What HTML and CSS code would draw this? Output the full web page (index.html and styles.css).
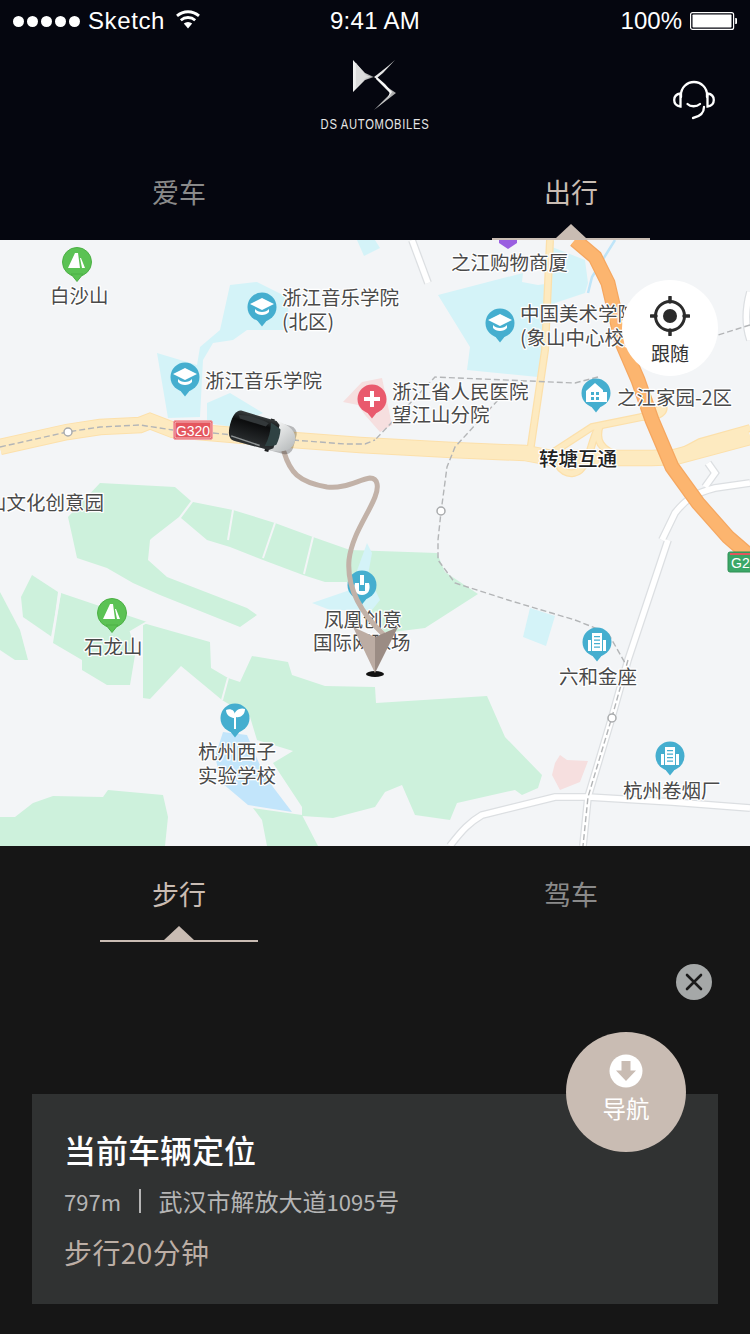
FILE: index.html
```html
<!DOCTYPE html>
<html lang="zh-CN">
<head>
<meta charset="utf-8">
<title>DS 出行</title>
<link rel="stylesheet" href="styles.css">
</head>
<body>
<div class="app">
  <header class="top">
    <div class="status">
      <div class="status-left">
        <span class="dots"><i></i><i></i><i></i><i></i><i></i></span>
        <span class="carrier">Sketch</span>
        <svg class="wifi" viewBox="0 0 26 20"><path d="M13 19.5 8.8 14.6a6.4 6.4 0 0 1 8.4 0z" fill="#fff"/><path d="M5.8 11.2a11 11 0 0 1 14.4 0M2 6.9a16.6 16.6 0 0 1 22 0" fill="none" stroke="#fff" stroke-width="2.8"/></svg>
      </div>
      <div class="status-mid">9:41 AM</div>
      <div class="status-right">
        <span>100%</span>
        <svg class="battery" viewBox="0 0 47 18"><rect x=".6" y=".6" width="43" height="16.8" rx="2" fill="none" stroke="#fff" stroke-width="1.2"/><rect x="2.5" y="2.5" width="39" height="13" rx=".8" fill="#fff"/><path d="M45.2 6h.8a1 1 0 0 1 1 1v4a1 1 0 0 1-1 1h-.8z" fill="#fff"/></svg>
      </div>
    </div>
    <div class="brand">
      <div></div>
      <div class="logo">
        <svg class="ds" viewBox="0 0 44 50">
          <defs>
            <linearGradient id="w1" x1="0" x2="1" y1="0" y2="0"><stop offset="0" stop-color="#f4f4f4"/><stop offset=".6" stop-color="#cfcfcf"/><stop offset="1" stop-color="#777"/></linearGradient>
            <linearGradient id="w2" x1="0" x2="1" y1="0" y2="1"><stop offset="0" stop-color="#fff"/><stop offset=".6" stop-color="#c8c8c8"/><stop offset="1" stop-color="#8a8a8a"/></linearGradient>
          </defs>
          <path d="M0 0 12 13 21 17 12 20 0 32Z" fill="url(#w1)"/>
          <path d="M3 3 12 15 19 17 12 18 3 28Z" fill="#dcdcdc"/>
          <path d="M42 0C34 7 29 11 25 14L21 17 29 23 34 27 43 33 21 50 36 35C38 31 34 27 30 24L24 18 30 13Z" fill="url(#w2)"/>
          <path d="M24 17 32 24 39 32 34 39 37 33 31 27 23 19Z" fill="#f7f7f7"/>
        </svg>
        <div class="wordmark">DS AUTOMOBILES</div>
      </div>
      <svg class="headset" viewBox="0 0 42 40">
        <g fill="none" stroke="#fff" stroke-width="2.3" stroke-linecap="round">
          <path d="M8 17V15a13 13 0 0 1 26 0v2"/>
          <path d="M7.500 13.500C4 14 1.200 15.800 1.200 20s2.800 6 6.300 6.500zM34.500 13.500c3.500.5 6.300 2.300 6.300 6.500s-2.800 6-6.300 6.500z"/>
          <path d="M14.500 24c3 3 9 3 12.500 0"/>
          <path d="M31 27c0 6-3.500 9.500-11 11"/>
        </g>
      </svg>
    </div>
    <nav class="tabs top-tabs">
      <div class="tab">爱车</div>
      <div class="tab on">出行</div>
    </nav>
  </header>

  <main class="map">
    <svg class="map-svg" viewBox="0 240 750 606">
      <defs>
        <linearGradient id="carbody" x1="0" x2="0" y1="0" y2="1"><stop offset="0" stop-color="#3a3f40"/><stop offset=".3" stop-color="#0c0d0e"/><stop offset="1" stop-color="#2c3032"/></linearGradient>
        <linearGradient id="hood" x1="0" x2="1" y1="0" y2="1"><stop offset="0" stop-color="#f4f5f5"/><stop offset="1" stop-color="#b0b4b5"/></linearGradient>
        <g id="tail"><circle r="14.500"/><path d="M-6 12 0 19.500 6 12z"/></g>
        <path id="rw1" d="M668 540 628 660 612 717 588 797 583 846"/>
        <path id="rw2" d="M662 540 675 513C685 500 695 493 715 488L750 483"/>
        <path id="rw3" d="M450 846C462 830 470 822 482 815L555 797 588 797 672 802 750 808"/>
        <path id="rw4" d="M412 240 428 283"/>
        <path id="rw5" d="M750 292C745 310 745 325 750 340"/>
        <path id="rw6" d="M708 463 715 473 705 487"/>
        <path id="y1" d="M0 447 67 432 100 427 140 425 150 421 173 430 233 435 293 440 360 445 452 450 525 453 552 458 652 458 675 457 750 437"/>
        <path id="y2" d="M530 452 545 350 550 240"/>
        <path id="y3" d="M552 453 592 427 642 417 665 407"/>
        <path id="y4" d="M557 456C556 470 570 478 580 470 590 460 590 445 598 428"/>
        <path id="y5" d="M600 425C595 440 600 450 620 456"/>
        <path id="y6" d="M670 458 700 442 750 428"/>
        <path id="y7" d="M640 417C655 417 668 415 662 402"/>
        <path id="hw" d="M575 240 595 257 608 283 622 343 638 380 652 420 672 467 698 503 728 537 750 556"/>
        <g id="tower">
          <path class="glyph" d="M-5 -9H5V9H-5zM-9 -2H-6V9H-9zM6 -2H9V9H6z"/>
          <path class="m-holes" d="M-3 -6H3V-4.800H-3zM-3 -2.500H3V-1.300H-3zM-3 1H3V2.200H-3zM-3 4.500H3V5.700H-3z"/>
        </g>
      </defs>

      <g class="park">
        <path d="M68 517 100 483 175 487 191 501 179 517 152 538 150 540 148 560 167 577 247 608 257 615 240 627 160 595 133 583 107 568 77 558 72 535z"/>
        <path d="M193 502 233 510 275 523 313 537 350 550 437 553 445 572 478 594 425 628 385 633 347 582 325 582 303 575 263 560 230 547 207 540 181 518z"/>
        <path d="M252 656 288 662 292 675 325 686 375 687 376 703 487 696 505 737 542 775 538 788 522 795 515 790 457 803 450 820 415 815 402 785 385 792 375 807 333 818 302 816 302 807 273 763 293 751 257 740 250 717 222 700 228 678 240 682z"/>
        <path d="M143 623 210 642 211 668 228 678 222 700 181 666 150 699 143 698z"/>
        <path d="M32 575 58 592 52 637 23 617 21 597z"/>
        <path d="M61 593 147 622 130 632 135 655 130 685 107 685 82 670 82 660 53 643z"/>
        <path d="M0 592 20 630 28 660 15 660 0 650z"/>
        <path d="M0 817 15 817 33 803 53 796 103 797 108 790 163 795 168 817 165 846 0 846z"/>
        <path d="M253 808 302 815 318 846 267 846 262 820z"/>
      </g>
      <g class="cuts">
        <path d="M233 510 228 540M275 523 263 558M313 537 304 574M60 593 52 637M222 700 228 678M147 622 130 632"/>
      </g>
      <g class="water">
        <path d="M230 285 257 282 287 297 290 330 247 330 233 340 213 343 203 360 200 417 168 418 157 353 197 365 200 347 220 330z"/>
        <path d="M207 403 230 393 263 413 233 427 207 423z"/>
        <path d="M357 240 375 240 380 248 364 256z"/>
        <path d="M438 295 523 273 522 282 538 285 552 283 552 247 585 260 588 283 585 293 555 303 543 347 538 377 467 370 470 347z"/>
        <path d="M530 608 555 616 546 646 523 637z"/>
        <path d="M367 543 372 553 368 575 380 600 372 610 330 610 312 603 350 590z"/>
      </g>
      <path class="lake" d="M223 732 247 735 262 770 273 787 292 812 248 805 222 783 215 757z"/>
      <path class="stream" d="M615 240 592 277 588 293"/>
      <g class="pink">
        <path d="M343 402 362 382 382 378 392 425 380 432 365 415 358 405z"/>
        <path d="M560 755 567 760 588 761 580 782 560 790 552 775 555 763z"/>
      </g>

      <g class="wroad-o">
        <use href="#rw1"/><use href="#rw2"/><use href="#rw3"/><use href="#rw4"/><use href="#rw5"/><use href="#rw6"/>
      </g>
      <g class="wroad-i">
        <use href="#rw1"/><use href="#rw2"/><use href="#rw3"/><use href="#rw4"/><use href="#rw5"/><use href="#rw6"/>
      </g>

      <g class="ythin-o">
        <use href="#y2"/><use href="#y3"/><use href="#y4"/><use href="#y5"/><use href="#y6"/><use href="#y7"/>
      </g>
      <g class="ymain-o"><use href="#y1"/></g>
      <g class="ythin-i">
        <use href="#y2"/><use href="#y3"/><use href="#y4"/><use href="#y5"/><use href="#y6"/><use href="#y7"/>
      </g>
      <g class="ymain-i"><use href="#y1"/></g>

      <g class="oroad-o"><use href="#hw"/></g>
      <g class="oroad-i"><use href="#hw"/></g>

      <g class="dash">
        <path d="M0 447 67 432 100 427 140 425 173 430"/>
        <path d="M213 433 233 435M293 440 345 444 365 444 375 440"/>
        <path d="M750 325 718 335M598 377 575 383 435 377 375 440"/>
        <path d="M498 400 455 447 447 467 441 512 438 540 438 560 455 583 508 600 575 620 608 633 625 663"/>
        <path d="M628 660 612 717 588 797 583 846"/>
      </g>
      <circle class="node" cx="68" cy="432" r="4"/>
      <circle class="node" cx="441" cy="511" r="4"/>
      <circle class="node" cx="612" cy="718" r="4"/>

      <g class="badge-red">
        <rect x="173.500" y="420.500" width="39" height="19" rx="2"/>
        <rect class="inner" x="175" y="422" width="36" height="16" rx="1"/>
        <text x="193" y="435.500">G320</text>
      </g>
      <g class="badge-green">
        <rect x="728" y="552" width="34" height="20" rx="2"/>
        <rect class="strip" x="730" y="553" width="30" height="2"/>
        <text x="731" y="568">G25</text>
      </g>

      <path class="pur" d="M499 240H517V243L508 249 499 243z"/>
      <use href="#tail" x="77" y="262" class="m-green"/>
      <path class="glyph" d="M75 253H78L80 268H68zM81 258 85 268H82L80 258z"/>
      <use href="#tail" x="112" y="613" class="m-green"/>
      <path class="glyph" d="M110 604H113L115 619H103zM116 609 120 619H117L115 609z"/>

      <use href="#tail" x="262" y="307" class="m-blue"/>
      <path class="glyph" d="M262 298 274 304 262 310 250 304zM255 309C258 313 266 313 269 309V312C266 316 258 316 255 312z"/>
      <use href="#tail" x="185" y="377" class="m-blue"/>
      <path class="glyph" d="M185 368 197 374 185 380 173 374zM178 379C181 383 189 383 192 379V382C189 386 181 386 178 382z"/>
      <use href="#tail" x="500" y="323" class="m-blue"/>
      <path class="glyph" d="M500 314 512 320 500 326 488 320zM493 325C496 329 504 329 507 325V328C504 332 496 332 493 328z"/>

      <use href="#tail" x="372" y="399" class="m-red"/>
      <path class="glyph" d="M370 391H374V397H380V401H374V407H370V401H364V397H370z"/>

      <use href="#tail" x="596" y="393" class="m-blue"/>
      <path class="glyph" d="M595 383 603 390V392H607V402H586V391z"/>
      <path class="m-holes" d="M591 392h3v3h-3zM596 392h3v3h-3zM591 397h3v3h-3zM596 397h3v3h-3z"/>

      <use href="#tail" x="235" y="718" class="m-blue"/>
      <path class="glyph" d="M234 718C232 718 226 716 226 710 231 708 235 711 234.500 714 235 711 240 707 245 709 245 715 240 718 236 717V729H234z"/>

      <use href="#tail" x="597" y="642" class="m-blue"/>
      <use href="#tower" x="597" y="642"/>
      <use href="#tail" x="670" y="756" class="m-blue"/>
      <use href="#tower" x="670" y="756"/>

      <use href="#tail" x="362" y="585" class="m-blue"/>
      <path class="glyph" d="M360 575H364V585H360zM355 583 359 583V591H365V583H369C371 590 368 595 362 595 356 595 353 590 355 583z"/>

      <g class="lb" transform="translate(0 1)">
        <text x="50" y="302">白沙山</text>
        <text x="282" y="304">浙江音乐学院</text>
        <text x="282" y="328">(北区)</text>
        <text x="205" y="387">浙江音乐学院</text>
        <text x="-13" y="509">山文化创意园</text>
        <text x="451" y="269">之江购物商厦</text>
        <text x="520" y="320">中国美术学院</text>
        <text x="520" y="344">(象山中心校区)</text>
        <text x="392" y="398">浙江省人民医院</text>
        <text x="392" y="421">望江山分院</text>
        <text x="617" y="404">之江家园-2区</text>
        <text x="539" y="465" class="dark">转塘互通</text>
        <text x="84" y="653">石龙山</text>
        <text x="198" y="758">杭州西子</text>
        <text x="198" y="782">实验学校</text>
        <text x="324" y="626">凤凰创意</text>
        <text x="313" y="649">国际网球场</text>
        <text x="559" y="683">六和金座</text>
        <text x="623" y="797">杭州卷烟厂</text>
      </g>

      <path class="route" d="M284 452C290 472 298 482 327 487 345 489 358 480 370 478 378 478 379 487 375 497 368 515 352 535 349 560 347 585 358 610 383 634"/>

      <ellipse class="pin-shadow" cx="375" cy="674" rx="9" ry="3"/>
      <path class="pin-l" d="M353 627 375 637V673z"/>
      <path class="pin-r" d="M398 627 375 637V673z"/>

      <g transform="translate(263 433) rotate(15)">
        <rect class="car-shadow" x="-33" y="-14" width="66" height="29" rx="8"/>
        <path d="M4 -16h4v3h-4zM6 13h4v4h-4z" fill="#1a1c1d"/>
        <path d="M10 -15C24 -15 33 -9 33 0S24 15 10 15z" fill="url(#hood)"/>
        <path d="M-26 -16 10 -15 14 -12 14 12 10 15-26 15C-31 15-34 10-34 0S-31-16-26-16z" fill="url(#carbody)"/>
        <path d="M5 -12C10 -11 14 -9 16 -8 17 -3 17 3 16 8 14 10 10 11 5 12 7 4 7 -4 5 -12z" fill="#2f4243"/>
        <path d="M-28 -11C-18 -14-6 -13 3 -11L1 -7-26 -8z" fill="#33383a"/>
        <path d="M-30 11 0 13" stroke="#8f9495" stroke-width="1.500" fill="none"/>
      </g>
    </svg>
    <div class="follow">
      <svg class="target" viewBox="0 0 40 40">
        <circle cx="20" cy="20" r="14.500" fill="none" stroke="#2b2b2b" stroke-width="3"/>
        <circle cx="20" cy="20" r="7" fill="#2b2b2b"/>
        <path d="M20 1v5M20 34v5M1 20h5M34 20h5" stroke="#2b2b2b" stroke-width="3.500" stroke-linecap="round"/>
      </svg>
      <span>跟随</span>
    </div>
  </main>

  <section class="panel">
    <nav class="tabs low-tabs">
      <div class="tab on">步行</div>
      <div class="tab">驾车</div>
    </nav>
    <div class="close-row">
      <button class="close" type="button" aria-label="关闭">
        <svg viewBox="0 0 18 18"><path d="M2 2 16 16M16 2 2 16" stroke="#1a1a1a" stroke-width="2.600" stroke-linecap="round"/></svg>
      </button>
    </div>
    <article class="card">
      <h1 class="card-title">当前车辆定位</h1>
      <p class="card-addr"><span class="num">797m</span><i class="sep"></i><span>武汉市解放大道<span class="num">1095</span>号</span></p>
      <p class="card-time">步行20分钟</p>
      <div class="nav-btn">
        <svg class="nav-icon" viewBox="0 0 34 34"><circle cx="17" cy="17" r="16.500" fill="#fff"/><path d="M12.500 7h9v9.500H27L17 27 7 16.500h5.500z" fill="#c9bcb3"/></svg>
        <span>导航</span>
      </div>
    </article>
  </section>
</div>
</body>
</html>
```
FILE: styles.css
```css
* { box-sizing: border-box; }
html, body { margin: 0; padding: 0; }
body { background: #161616; font-family: "Noto Sans CJK SC", "Liberation Sans", sans-serif; }
.app { width: 750px; height: 1334px; overflow: hidden; display: flex; flex-direction: column; }

.top { height: 240px; background: #05060f; color: #fff; display: flex; flex-direction: column; }
.status { height: 42px; padding: 0 13px; display: grid; grid-template-columns: 1fr auto 1fr; align-items: center; font-family: "Liberation Sans", sans-serif; font-size: 24px; }
.status-left { display: flex; align-items: center; gap: 8px; }
.carrier { letter-spacing: .6px; }
.dots { display: flex; gap: 3px; }
.dots i { width: 11px; height: 11px; border-radius: 50%; background: #fff; }
.wifi { width: 26px; height: 20px; margin-left: 2px; margin-top: -4px; }
.status-mid { text-align: center; letter-spacing: .3px; }
.status-right { display: flex; justify-content: flex-end; align-items: center; gap: 8px; }
.battery { width: 47px; height: 18px; }

.brand { height: 108px; display: grid; grid-template-columns: 1fr auto 1fr; align-items: start; padding-top: 18px; }
.logo { display: flex; flex-direction: column; align-items: center; }
.ds { width: 44px; height: 50px; }
.wordmark { font-family: "Liberation Sans", sans-serif; font-size: 14px; line-height: 16px; margin-top: 6px; letter-spacing: .9px; color: #e6e6e6; white-space: nowrap; transform: scaleX(.8); }
.headset { width: 42px; height: 40px; justify-self: end; margin: 20px 35px 0 0; }

.tabs { display: flex; justify-content: space-between; padding: 0 100px; }
.tab { width: 158px; text-align: center; position: relative; font-size: 27px; color: #8a8a8a; }
.tab.on { color: #c9bcb3; border-bottom: 2px solid #c9bcb3; }
.tab.on::after { content: ""; position: absolute; left: 50%; bottom: 0; margin-left: -15px; border-left: 15px solid transparent; border-right: 15px solid transparent; border-bottom: 14px solid #c9bcb3; }
.top-tabs { height: 90px; }
.top-tabs .tab { line-height: 84px; height: 90px; }
.low-tabs { height: 96px; }
.low-tabs .tab { line-height: 96px; height: 96px; }

.map { height: 606px; position: relative; background: #f3f5f7; overflow: hidden; }
.map-svg { display: block; width: 750px; height: 606px; }
.park path { fill: #cdf1dc; }
.cuts path { fill: none; stroke: #f3f5f7; stroke-width: 2; }
.water path { fill: #d4f3f8; }
.lake { fill: #c2e5fb; }
.stream { fill: none; stroke: #bfe5f9; stroke-width: 2.5; }
.pink path { fill: #f6dfdf; }
.wroad-o { fill: none; stroke: #dcdfe2; stroke-width: 8; }
.wroad-i { fill: none; stroke: #fff; stroke-width: 5.5; }
.ymain-o { fill: none; stroke: #fce0ab; stroke-width: 16.5; }
.ymain-i { fill: none; stroke: #fdeac0; stroke-width: 14.5; }
.ythin-o { fill: none; stroke: #fce0ab; stroke-width: 8; }
.ythin-i { fill: none; stroke: #fdeac0; stroke-width: 5.5; }
.oroad-o { fill: none; stroke: #f5a760; stroke-width: 15; }
.oroad-i { fill: none; stroke: #fcb56f; stroke-width: 12.5; }
.dash path { fill: none; stroke: #b3b5b7; stroke-width: 1.4; stroke-dasharray: 6 3; }
.node { fill: #fff; stroke: #a9abad; stroke-width: 1.5; }
.badge-red rect { fill: #e4565d; stroke: #f3a4a6; }
.badge-red .inner { fill: none; stroke: #fff; stroke-width: .6; }
.badge-red text { fill: #fff; font: 14px "Liberation Sans", sans-serif; text-anchor: middle; }
.badge-green rect { fill: #3aa767; stroke: #2f8f55; }
.badge-green .strip { fill: #e4565d; stroke: none; }
.badge-green text { fill: #fff; font: 14px "Liberation Sans", sans-serif; }
.pur { fill: #9a5fe0; }
.m-green { fill: #5bc254; stroke: #4cb045; }
.m-blue { fill: #45aecf; }
.m-red { fill: #e95a6d; }
.glyph { fill: #fff; }
.m-holes { fill: #45aecf; }
.lb text { font-size: 19.5px; fill: #4a4a4a; stroke: #fff; stroke-width: 2.5px; paint-order: stroke; stroke-linejoin: round; }
.lb text.dark { fill: #222; font-weight: 500; }
.route { fill: none; stroke: #c2b2a8; stroke-width: 5; stroke-linecap: round; }
.pin-shadow { fill: #111; }
.pin-l { fill: #bcaca3; }
.pin-r { fill: #9b8c84; }
.car-shadow { fill: #000; opacity: .25; }

.follow { position: absolute; left: 622px; top: 40px; width: 96px; height: 96px; border-radius: 50%; background: #fff; display: flex; flex-direction: column; align-items: center; padding-top: 16px; color: #333; font-size: 19px; line-height: 24px; }
.target { width: 40px; height: 40px; }
.follow span { margin-top: 5px; }

.panel { flex: 1; background: #161616; display: flex; flex-direction: column; }
.close-row { height: 152px; display: flex; justify-content: flex-end; align-items: flex-start; padding: 22px 38px 0 0; }
.close { width: 36px; height: 36px; border: 0; padding: 0; border-radius: 50%; background: #a5a8a8; display: flex; align-items: center; justify-content: center; }
.close svg { width: 18px; height: 18px; }

.card { height: 210px; margin: 0 32px; padding: 31px 32px 0 32px; background: #303232; position: relative; }
.card-title { margin: 0; font-size: 32px; line-height: 48px; font-weight: 500; color: #fff; }
.card-addr { margin: 10px 0 0; display: flex; align-items: center; font-size: 24px; line-height: 36px; color: #b5b5b5; }
.num { font-size: 22px; }
.sep { width: 1.5px; height: 24px; background: #b5b5b5; margin: 0 18px; }
.card-time { margin: 13px 0 0; font-size: 28px; line-height: 40px; letter-spacing: .4px; color: #bcaea5; }
.nav-btn { position: absolute; left: 534px; top: -62px; width: 120px; height: 120px; border-radius: 50%; background: #c9bcb3; display: flex; flex-direction: column; align-items: center; padding-top: 22px; color: #fff; font-size: 23.5px; line-height: 34px; }
.nav-icon { width: 34px; height: 34px; }
.nav-btn span { margin-top: 3px; }
```
